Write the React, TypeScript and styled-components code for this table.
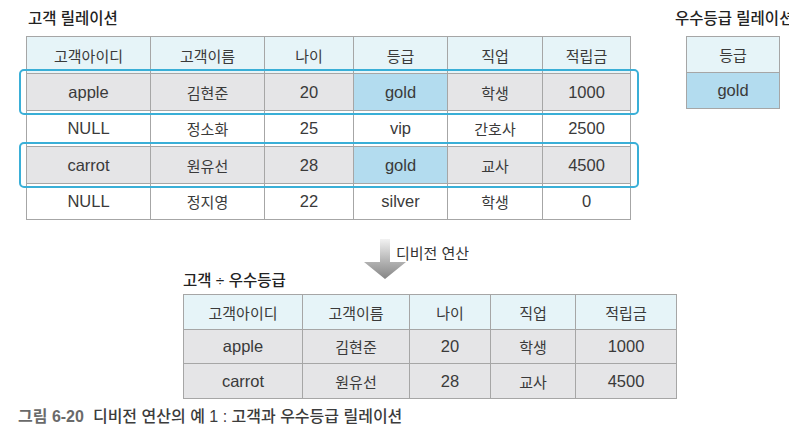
import React from 'react';
import styled, { createGlobalStyle } from 'styled-components';

const GlobalStyle = createGlobalStyle`
  html, body {
    margin: 0;
    padding: 0;
    background: #ffffff;
    overflow: hidden;
  }
  body {
    font-family: 'Liberation Sans', 'Noto Sans CJK KR', sans-serif;
    color: #333;
  }
`;

const colors = {
  border: '#a6a6a6',
  header: '#e6f4f8',
  gray: '#e5e5e7',
  gold: '#b3dcef',
  white: '#ffffff',
  outline: '#3aafd7',
};

const SPage = styled.div`
  width: 789px;
  height: 442px;
`;

const STop = styled.div`
  display: flex;
  align-items: flex-start;
  padding-top: 9px;
`;

const SBlock = styled.div<{ $offset: number }>`
  display: flex;
  flex-direction: column;
  flex-shrink: 0;
  margin-left: ${(p) => p.$offset}px;
`;

const STitle = styled.div<{ $indent?: number }>`
  font-family: 'Liberation Sans', 'Noto Sans CJK KR', sans-serif;
  font-size: 15.5px;
  font-weight: 500;
  line-height: 20px;
  color: #222;
  white-space: nowrap;
  margin-left: ${(p) => p.$indent ?? 0}px;
  margin-bottom: 7px;
`;

const STable = styled.div<{ $indent?: number }>`
  border-top: 1px solid ${colors.border};
  border-left: 1px solid ${colors.border};
  align-self: flex-start;
  margin-left: ${(p) => p.$indent ?? 0}px;
`;

const SRow = styled.div<{ $cols: string; $highlight?: boolean }>`
  display: grid;
  grid-template-columns: ${(p) => p.$cols};
  position: relative;

  ${(p) =>
    p.$highlight &&
    `
    &::after {
      content: '';
      position: absolute;
      top: -5px;
      bottom: -4px;
      left: -8px;
      right: -8px;
      border: 2px solid ${colors.outline};
      border-radius: 5px;
      z-index: 1;
      pointer-events: none;
    }
  `}
`;

type Tone = 'header' | 'gray' | 'gold' | 'white';

const SCell = styled.div<{ $tone: Tone; $h: number; $latin: boolean }>`
  box-sizing: border-box;
  height: ${(p) => p.$h}px;
  border-right: 1px solid ${colors.border};
  border-bottom: 1px solid ${colors.border};
  background: ${(p) => colors[p.$tone]};
  display: flex;
  align-items: center;
  justify-content: center;
  font-size: ${(p) => (p.$latin ? 16.5 : 15)}px;
  color: #3a3a3a;
  white-space: nowrap;
`;

const SBottom = styled.div`
  display: flex;
  flex-direction: column;
  margin-left: 183px;
`;

const SOpHead = styled.div`
  display: grid;
  grid-template-columns: 180px auto;
  height: 74px;
`;

const SResultTitle = styled(STitle)`
  align-self: end;
  margin-bottom: 3px;
`;

const SArrowGroup = styled.div`
  display: flex;
  align-items: flex-start;
  margin-top: 19px;
`;

const SOpLabel = styled.span`
  font-size: 15px;
  line-height: 20px;
  color: #333;
  margin-left: -11px;
  margin-top: 5px;
  white-space: nowrap;
`;

const SCaption = styled.div`
  margin: 8px 0 0 18px;
  font-size: 16px;
  font-weight: 500;
  line-height: 20px;
  color: #3c3c3c;
  white-space: nowrap;
`;

const SCaptionLabel = styled.span`
  color: #6a6a6a;
  font-weight: 700;
  margin-right: 9px;
`;

type Row = { cells: string[]; tone?: Tone; gold?: number; highlight?: boolean; h: number };

const isLatin = (s: string) => /^[A-Za-z0-9 ]+$/.test(s);

const Table: React.FC<{ cols: number[]; rows: Row[]; indent?: number }> = ({ cols, rows, indent }) => {
  const template = cols.map((c) => `${c}px`).join(' ');
  return (
    <STable $indent={indent}>
      {rows.map((row, ri) => (
        <SRow key={ri} $cols={template} $highlight={row.highlight}>
          {row.cells.map((c, ci) => (
            <SCell
              key={ci}
              $h={row.h}
              $latin={isLatin(c)}
              $tone={row.gold === ci ? 'gold' : row.tone ?? 'white'}
            >
              {c}
            </SCell>
          ))}
        </SRow>
      ))}
    </STable>
  );
};

const DownArrow = () => (
  <svg width="44" height="40" viewBox="0 0 44 40">
    <defs>
      <linearGradient id="arrowShade" x1="0" y1="0" x2="0" y2="1">
        <stop offset="0" stopColor="#f2f2f2" />
        <stop offset="0.55" stopColor="#b4b4b4" />
        <stop offset="1" stopColor="#858585" />
      </linearGradient>
    </defs>
    <path d="M17 0 H27 V23 H43 L22 40 L1 23 H17 Z" fill="url(#arrowShade)" />
  </svg>
);

const customerRows: Row[] = [
  { cells: ['고객아이디', '고객이름', '나이', '등급', '직업', '적립금'], tone: 'header', h: 37 },
  { cells: ['apple', '김현준', '20', 'gold', '학생', '1000'], tone: 'gray', gold: 3, highlight: true, h: 37 },
  { cells: ['NULL', '정소화', '25', 'vip', '간호사', '2500'], h: 36 },
  { cells: ['carrot', '원유선', '28', 'gold', '교사', '4500'], tone: 'gray', gold: 3, highlight: true, h: 37 },
  { cells: ['NULL', '정지영', '22', 'silver', '학생', '0'], h: 36 },
];

const gradeRows: Row[] = [
  { cells: ['등급'], tone: 'header', h: 36 },
  { cells: ['gold'], tone: 'gold', h: 36 },
];

const resultRows: Row[] = [
  { cells: ['고객아이디', '고객이름', '나이', '직업', '적립금'], tone: 'header', h: 35 },
  { cells: ['apple', '김현준', '20', '학생', '1000'], tone: 'gray', h: 34 },
  { cells: ['carrot', '원유선', '28', '교사', '4500'], tone: 'gray', h: 35 },
];

export default function App() {
  return (
    <>
      <GlobalStyle />
      <SPage>
        <STop>
          <SBlock $offset={26}>
            <STitle $indent={2}>고객 릴레이션</STitle>
            <Table cols={[124, 114, 89, 94, 95, 88]} rows={customerRows} />
          </SBlock>
          <SBlock $offset={44}>
            <STitle>우수등급 릴레이션</STitle>
            <Table cols={[93]} rows={gradeRows} indent={11} />
          </SBlock>
        </STop>

        <SBottom>
          <SOpHead>
            <SResultTitle>고객 ÷ 우수등급</SResultTitle>
            <SArrowGroup>
              <DownArrow />
              <SOpLabel>디비전 연산</SOpLabel>
            </SArrowGroup>
          </SOpHead>
          <Table cols={[119, 107, 81, 85, 101]} rows={resultRows} />
        </SBottom>

        <SCaption>
          <SCaptionLabel>그림 6-20</SCaptionLabel>디비전 연산의 예 1 : 고객과 우수등급 릴레이션
        </SCaption>
      </SPage>
    </>
  );
}
